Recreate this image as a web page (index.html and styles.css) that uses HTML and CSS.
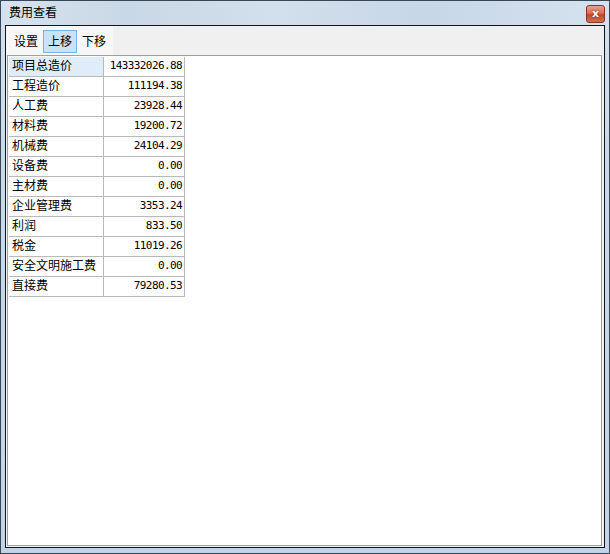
FILE: index.html
```html
<!DOCTYPE html>
<html lang="zh-CN">
<head>
    <meta charset="UTF-8">
    <title>费用查看</title>
    <link rel="stylesheet" href="styles.css">
</head>
<body>
<div class="window">
    <!-- Barra de título -->
    <div class="titlebar">
        <span class="title">费用查看</span>
        <span class="close-btn">x</span>
    </div>

    <div class="client">
        <!-- Ferramentas -->
        <div class="toolbar">
            <div class="tools">
                <span class="tool">设置</span>
                <span class="tool hot">上移</span>
                <span class="tool">下移</span>
            </div>
        </div>

        <!-- Tabela de custos -->
        <div class="grid">
            <table class="costs">
                <tr><td class="name selected">项目总造价</td><td class="val">143332026.88</td></tr>
                <tr><td class="name">工程造价</td><td class="val">111194.38</td></tr>
                <tr><td class="name">人工费</td><td class="val">23928.44</td></tr>
                <tr><td class="name">材料费</td><td class="val">19200.72</td></tr>
                <tr><td class="name">机械费</td><td class="val">24104.29</td></tr>
                <tr><td class="name">设备费</td><td class="val">0.00</td></tr>
                <tr><td class="name">主材费</td><td class="val">0.00</td></tr>
                <tr><td class="name">企业管理费</td><td class="val">3353.24</td></tr>
                <tr><td class="name">利润</td><td class="val">833.50</td></tr>
                <tr><td class="name">税金</td><td class="val">11019.26</td></tr>
                <tr><td class="name">安全文明施工费</td><td class="val">0.00</td></tr>
                <tr><td class="name">直接费</td><td class="val">79280.53</td></tr>
            </table>
        </div>
    </div>
</div>
</body>
</html>
```

FILE: styles.css
```css
/* Reset básico */
* {
    margin: 0;
    padding: 0;
    box-sizing: border-box;
    font-family: "Noto Sans CJK SC", "Liberation Sans", sans-serif;
}

body {
    width: 610px;
    height: 554px;
    overflow: hidden;
    background: #fff;
}

/* Janela */
.window {
    width: 610px;
    height: 554px;
    display: flex;
    flex-direction: column;
    border: 1px solid #3a4652;
    padding: 0 4px 5px 4px;
    background: linear-gradient(to bottom, #d3e2f1 0%, #c6d9ed 30%, #bfd4ea 100%);
}

.titlebar {
    height: 24px;
    display: flex;
    justify-content: space-between;
    align-items: flex-start;
    padding-left: 4px;
    background: linear-gradient(to right, #d6e3ef 0%, #c9d8e6 20%, #d2dfec 45%, #c7d7e8 70%, #d5e2ef 100%);
}

.title {
    font-size: 12px;
    line-height: 22px;
    color: #000;
}

.close-btn {
    width: 19px;
    height: 18px;
    margin-top: 4px;
    margin-right: 0;
    border: 1px solid #8a3424;
    border-radius: 3px;
    background: linear-gradient(to bottom, #eaa38f 0%, #d86d52 45%, #c4482d 55%, #d2704f 100%);
    color: #fff;
    font-family: "DejaVu Sans", sans-serif;
    font-weight: bold;
    font-size: 11px;
    line-height: 15px;
    text-align: center;
    text-shadow: 0 0 2px #5a1a10;
}

/* Área cliente */
.client {
    flex: 1;
    display: flex;
    flex-direction: column;
    border: 1px solid #141414;
    background: #f0f0f0;
}

.toolbar {
    height: 29px;
    display: flex;
}

.tools {
    display: flex;
    align-items: flex-start;
    padding: 4px 2px 0 3px;
    background: #f7f7f7;
}

.tool {
    height: 23px;
    padding: 0 4px;
    border: 1px solid transparent;
    font-size: 12px;
    line-height: 19px;
    color: #000;
}

.tool.hot {
    background: #c9e2f8;
    border-color: #7fb0e2;
}

/* Grade */
.grid {
    flex: 1;
    margin: 0 2px 1px 1px;
    border: 1px solid #a0a0a0;
    background: #fff;
}

.costs {
    border-collapse: separate;
    border-spacing: 0;
    margin: 1px 0 0 1px;
}

.costs td {
    height: 20px;
    padding: 0 3px 3px 3px;
    border-right: 1px solid #b9b9b9;
    border-bottom: 1px solid #b9b9b9;
    font-size: 12px;
    line-height: 16px;
    color: #000;
    white-space: nowrap;
}

.costs td.name {
    width: 95px;
}

.costs td.val {
    width: 81px;
    text-align: right;
    padding-right: 2px;
    padding-bottom: 1px;
    line-height: 18px;
    font-family: "DejaVu Sans Mono", monospace;
    font-size: 11px;
    letter-spacing: -0.6px;
}

.costs td.selected {
    background: #dfedfb;
}
```
